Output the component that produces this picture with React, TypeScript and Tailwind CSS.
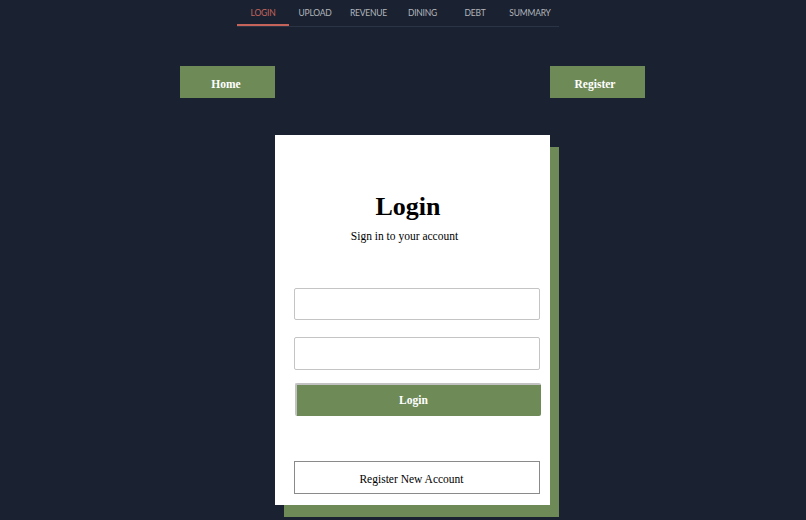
import React from "react";

const tabs: { t: string; w: string }[] = [
  { t: "LOGIN", w: "w-[52px]" },
  { t: "UPLOAD", w: "w-[52px]" },
  { t: "REVENUE", w: "w-[55px]" },
  { t: "DINING", w: "w-[53px]" },
  { t: "DEBT", w: "w-[52px]" },
  { t: "SUMMARY", w: "w-[58px]" },
];

export default function App() {
  return (
    <div className="min-h-[520px] bg-[#1a2232] font-['Liberation_Serif',serif]">
      <div className="ml-[237px] flex w-[322px] border-b border-[#2a3444]">
        {tabs.map(({ t, w }, i) => (
          <div
            key={t}
            className={
              i === 0
                ? `-mb-px flex h-[26px] ${w} items-center justify-center border-b-2 border-[#c5625a] pt-[2px] font-['Lato',sans-serif] text-[8.5px] tracking-[-0.2px] text-[#c5625a]`
                : `flex h-[26px] ${w} items-center justify-center pt-[1px] font-['Lato',sans-serif] text-[8.5px] tracking-[-0.2px] text-[#b2b5ba]`
            }
          >
            {t}
          </div>
        ))}
      </div>

      <div className="ml-[180px] mt-[39px] flex w-[465px] justify-between">
        <button className="h-[32px] w-[95px] bg-[#6e8a57] pr-[3px] pt-[5px] text-[11.5px] font-bold text-white">
          Home
        </button>
        <button className="h-[32px] w-[95px] bg-[#6e8a57] pr-[5px] pt-[5px] text-[11.5px] font-bold text-white">
          Register
        </button>
      </div>

      <div className="ml-[275px] mt-[37px] flex h-[370px] w-[275px] flex-col bg-white shadow-[9px_12px_0_#6e8a57]">
        <h1 className="mt-[57px] pr-[9px] text-center text-[26px] font-bold leading-[30px] text-black">
          Login
        </h1>
        <p className="mt-[7px] pr-[16px] text-center text-[11.5px] leading-[14px] text-black">
          Sign in to your account
        </p>
        <input className="ml-[19px] mt-[45px] h-[32px] w-[246px] rounded-[2px] border border-[#c4c4c4] outline-none" />
        <input className="ml-[19px] mt-[17px] h-[33px] w-[246px] rounded-[2px] border border-[#c4c4c4] outline-none" />
        <button className="ml-[20px] mt-[13px] h-[33px] w-[246px] rounded-[2px] border-l-2 border-t-2 border-[#c2c2c2] bg-[#6e8a57] pr-[11px] text-[11.5px] font-bold text-white">
          Login
        </button>
        <button className="ml-[19px] mt-[45px] h-[33px] w-[246px] border border-[#8a8a8a] bg-white pr-[11px] pt-[5px] text-[11.5px] text-black">
          Register New Account
        </button>
      </div>
    </div>
  );
}
